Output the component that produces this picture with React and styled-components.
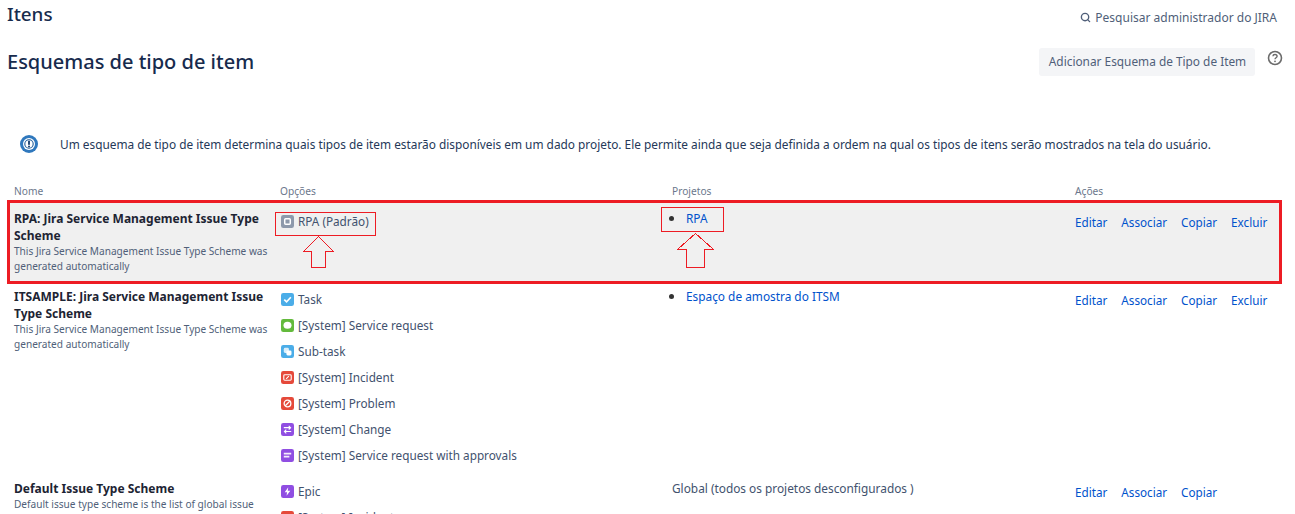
import React from 'react';
import styled, { createGlobalStyle } from 'styled-components';
import { Search } from 'lucide-react';

const Global = createGlobalStyle`
  html, body { margin: 0; padding: 0; background: #fff; height: 514px; overflow: hidden; }
  body { font-family: "Noto Sans", "Open Sans", "Liberation Sans", sans-serif; font-size: 11.85px; color: #172b4d; }
`;

const Page = styled.div`
  width: 1295px;
  height: 514px;
  overflow: hidden;
`;
const TopBar = styled.header`
  display: flex;
  justify-content: space-between;
  align-items: center;
  height: 30px;
  padding: 0 18px 0 7px;
`;
const PageTitle = styled.h1`
  margin: 0 0 2px;
  font-size: 18.8px;
  font-weight: 500;
  line-height: 28px;
`;
const AdminSearch = styled.div`
  display: flex;
  align-items: center;
  gap: 4px;
  font-size: 12px;
  color: #505f79;
  margin-top: 5px;
`;
const HeadBar = styled.div`
  display: flex;
  justify-content: space-between;
  align-items: flex-start;
  height: 100px;
  padding: 18px 12px 0 7px;
  box-sizing: border-box;
`;
const SectionTitle = styled.h2`
  margin: 0;
  font-size: 20px;
  font-weight: 500;
  line-height: 28px;
`;
const HeadActions = styled.div`
  display: flex;
  align-items: flex-start;
  gap: 12px;
`;
const AddButton = styled.button`
  height: 28px;
  width: 216px;
  border: 0;
  padding: 0 0 2px 1px;
  border-radius: 3px;
  background: #f4f5f7;
  color: #505f79;
  font: inherit;
  font-size: 11.85px;
`;
const HelpIcon = styled.svg`
  width: 16px;
  height: 16px;
  margin-top: 2px;
`;
const Notice = styled.div`
  display: flex;
  align-items: center;
  gap: 22px;
  height: 28px;
  padding-left: 20px;
`;
const NoticeText = styled.p`
  margin: 0;
  color: #253858;
  white-space: nowrap;
`;
const Columns = styled.div`
  display: grid;
  grid-template-columns: 266px 392px 403px 1fr;
  padding-left: ${(p) => p.$inset}px;
`;
const Headers = styled(Columns)`
  margin-top: 24px;
  height: 18px;
  align-items: center;
  font-size: 10.2px;
  color: #6b778c;
`;
const Row = styled(Columns)`
  position: relative;
  height: ${(p) => p.$h}px;
  padding-top: ${(p) => p.$top}px;
  box-sizing: border-box;
  ${(p) => p.$marked && `
    background: #f0f0f0;
    border: 3px solid #ed1c24;
    margin: 0 13px 0 7px;
    height: 84px;
  `}
`;
const NameCell = styled.div`
  padding-right: 4px;
`;
const SchemeName = styled.div`
  font-weight: 700;
  font-size: 12px;
  line-height: 17px;
  color: #1d2433;
`;
const SchemeDesc = styled.div`
  font-size: 10.1px;
  line-height: 15px;
  color: #505f79;
`;
const OptionList = styled.ul`
  list-style: none;
  margin: 0;
  padding: 0;
`;
const Option = styled.li`
  display: flex;
  align-items: center;
  gap: 4px;
  height: 26px;
  margin-top: -2px;
  margin-bottom: 2px;
  padding-left: 1px;
  font-size: 11.75px;
  color: #42526e;
  white-space: nowrap;
`;
const ProjectList = styled.ul`
  margin: -2px 0 0;
  padding: 0 0 0 14px;
  line-height: 18px;
  li::marker { font-size: 15px; color: #333; }
`;
const Link = styled.a`
  color: #0052cc;
  text-decoration: none;
`;
const Plain = styled.div`
  line-height: 18px;
  margin-top: -1px;
  color: #42526e;
`;
const Actions = styled.div`
  display: flex;
  gap: 14px;
  line-height: 18px;
  font-size: 11.7px;
  margin-top: 3px;
`;
const Callout = styled.div`
  position: absolute;
  border: 1px solid #ed1c24;
  box-sizing: border-box;
  left: ${(p) => p.$x}px;
  top: ${(p) => p.$y}px;
  width: ${(p) => p.$w}px;
  height: ${(p) => p.$h}px;
`;
const Arrow = styled.svg`
  position: absolute;
  left: ${(p) => p.$x}px;
  top: ${(p) => p.$y}px;
`;
const IconBox = styled.svg`
  width: 13px;
  height: 13px;
  flex: none;
`;

const Ico = ({ bg, children }) => (
  <IconBox viewBox="0 0 14 14">
    <rect width="14" height="14" rx="2.500" fill={bg} />
    {children}
  </IconBox>
);

const icons = {
  rpa: <Ico bg="#8d99ab"><rect x="4" y="4" width="6" height="6" rx="1" fill="none" stroke="#fff" strokeWidth="1.6" /></Ico>,
  task: <Ico bg="#4bade8"><path d="M3.500 7.200 6 9.600l4.600-5" fill="none" stroke="#fff" strokeWidth="1.800" /></Ico>,
  service: <Ico bg="#63ba3c"><ellipse cx="7" cy="6.800" rx="4.300" ry="3.800" fill="#fff" /></Ico>,
  sub: <Ico bg="#4bade8"><rect x="3" y="3" width="5.500" height="5.500" rx="1.500" fill="#fff" opacity=".8" /><rect x="5.800" y="5.800" width="5.500" height="5.500" rx="1.500" fill="#fff" /></Ico>,
  incident: <Ico bg="#e5493a"><rect x="3" y="4" width="8" height="6" rx="1" fill="none" stroke="#fff" strokeWidth="1.200" /><path d="M5.500 8.500 8.500 5.500" stroke="#fff" strokeWidth="1.100" /></Ico>,
  problem: <Ico bg="#e5493a"><circle cx="7" cy="7" r="3.600" fill="none" stroke="#fff" strokeWidth="1.400" /><path d="M4.600 9.400 9.400 4.600" stroke="#fff" strokeWidth="1.300" /></Ico>,
  change: <Ico bg="#904ee2"><path d="M3 5h7M8.300 3l2 2-2 2M11 9.200H4M5.700 7.200l-2 2 2 2" fill="none" stroke="#fff" strokeWidth="1.200" /></Ico>,
  approval: <Ico bg="#904ee2"><path d="M3 4h8v2H3zM3 7.200h6v2H3z" fill="#fff" opacity=".9" /></Ico>,
  epic: <Ico bg="#904ee2"><path d="M7.800 2.500 4 7.800h2.500L6 11.500l4-5.400H7.300z" fill="#fff" /></Ico>,
  blank: <Ico bg="#e5493a" />,
};

const UpArrow = ({ x, y, w, h, base, inset }) => (
  <Arrow $x={x} $y={y} width={w + 1} height={h + 1} viewBox={`0 0 ${w + 1} ${h + 1}`} shapeRendering="crispEdges">
    <path
      d={`M${w / 2 + 0.5} .5 ${w + 0.5} ${base + 0.5}H${w - inset + 0.5}V${h + 0.5}H${inset + 0.5}V${base + 0.5}H.5z`}
      fill="none"
      stroke="#ed1c24"
      strokeWidth="1"
    />
  </Arrow>
);

const ActionLinks = ({ del = true }) => (
  <Actions>
    <Link href="#">Editar</Link>
    <Link href="#">Associar</Link>
    <Link href="#">Copiar</Link>
    {del && <Link href="#">Excluir</Link>}
  </Actions>
);

const itsm = [
  ['task', 'Task'],
  ['service', '[System] Service request'],
  ['sub', 'Sub-task'],
  ['incident', '[System] Incident'],
  ['problem', '[System] Problem'],
  ['change', '[System] Change'],
  ['approval', '[System] Service request with approvals'],
];

const Options = ({ items }) => (
  <OptionList>
    {items.map(([k, t]) => (
      <Option key={t}>{icons[k]}<span>{t}</span></Option>
    ))}
  </OptionList>
);

export default function App() {
  return (
    <Page>
      <Global />
      <TopBar>
        <PageTitle>Itens</PageTitle>
        <AdminSearch>
          <Search size={11} strokeWidth={3} color="#505f79" />
          Pesquisar administrador do JIRA
        </AdminSearch>
      </TopBar>
      <HeadBar>
        <SectionTitle>Esquemas de tipo de item</SectionTitle>
        <HeadActions>
          <AddButton>Adicionar Esquema de Tipo de Item</AddButton>
          <HelpIcon viewBox="0 0 16 16">
            <circle cx="8" cy="8" r="6.500" fill="none" stroke="#6b6b6b" strokeWidth="1.600" />
            <path d="M5.900 6.300C6 5 7 4.500 8 4.500c1.200 0 2.100.7 2.100 1.800 0 1.500-2.100 1.500-2.100 3" fill="none" stroke="#6b6b6b" strokeWidth="1.400" />
            <circle cx="8" cy="11.300" r=".9" fill="#6b6b6b" />
          </HelpIcon>
        </HeadActions>
      </HeadBar>
      <Notice>
        <svg width="18" height="18" viewBox="0 0 18 18">
          <circle cx="9" cy="9" r="9" fill="#2f78bd" />
          <circle cx="9" cy="9" r="6" fill="#fff" />
          <circle cx="9" cy="9" r="4.200" fill="none" stroke="#1c5a99" strokeWidth="1.100" />
          <rect x="8.100" y="5.800" width="1.800" height="4" fill="#123a6b" />
          <rect x="8.100" y="10.700" width="1.800" height="1.600" fill="#123a6b" />
        </svg>
        <NoticeText>Um esquema de tipo de item determina quais tipos de item estarão disponíveis em um dado projeto. Ele permite ainda que seja definida a ordem na qual os tipos de itens serão mostrados na tela do usuário.</NoticeText>
      </Notice>
      <Headers $inset={14}>
        <span>Nome</span><span>Opções</span><span>Projetos</span><span>Ações</span>
      </Headers>
      <Row $marked $inset={4} $top={7}>
        <NameCell>
          <SchemeName>RPA: Jira Service Management Issue Type Scheme</SchemeName>
          <SchemeDesc>This Jira Service Management Issue Type Scheme was generated automatically</SchemeDesc>
        </NameCell>
        <Options items={[['rpa', 'RPA (Padrão)']]} />
        <ProjectList><li><Link href="#">RPA</Link></li></ProjectList>
        <ActionLinks />
        <Callout $x={265} $y={9} $w={101} $h={24} />
        <Callout $x={651} $y={4} $w={63} $h={25} />
        <UpArrow x={293} y={33} w={30} h={31} base={15} inset={8} />
        <UpArrow x={667} y={30} w={36} h={34} base={16} inset={9} />
      </Row>
      <Row $inset={14} $top={4} $h={192}>
        <NameCell>
          <SchemeName>ITSAMPLE: Jira Service Management Issue Type Scheme</SchemeName>
          <SchemeDesc>This Jira Service Management Issue Type Scheme was generated automatically</SchemeDesc>
        </NameCell>
        <Options items={itsm} />
        <ProjectList><li><Link href="#">Espaço de amostra do ITSM</Link></li></ProjectList>
        <ActionLinks />
      </Row>
      <Row $inset={14} $top={4} $h={80}>
        <NameCell>
          <SchemeName>Default Issue Type Scheme</SchemeName>
          <SchemeDesc>Default issue type scheme is the list of global issue types. All newly created issue types will automatically be added to this scheme.</SchemeDesc>
        </NameCell>
        <Options items={[['epic', 'Epic'], ['blank', '[System] Incident']]} />
        <Plain>Global (todos os projetos desconfigurados )</Plain>
        <ActionLinks del={false} />
      </Row>
    </Page>
  );
}
